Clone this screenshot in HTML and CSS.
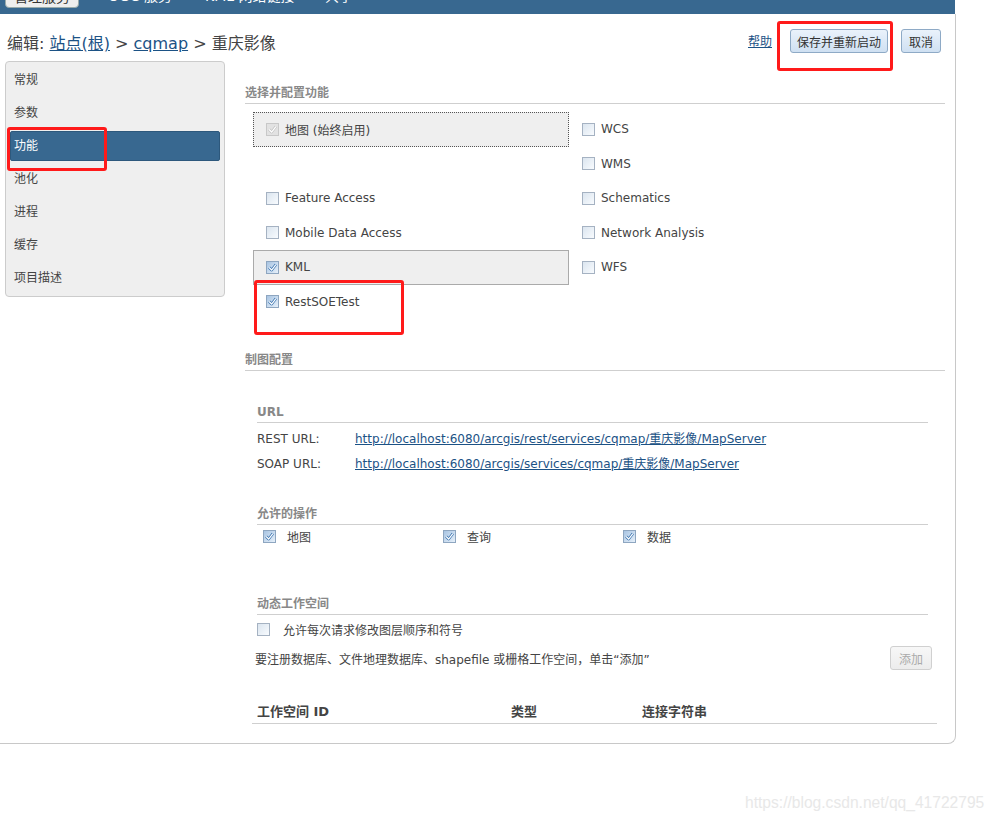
FILE: index.html
```html
<!DOCTYPE html>
<html lang="zh-CN">
<head>
<meta charset="utf-8">
<title>编辑: 重庆影像</title>
<link rel="stylesheet" href="styles.css">
</head>
<body>
<div class="topbar">
  <div class="tabs">
    <div class="tabcell"><span class="tab tab-active">管理服务</span></div>
    <div class="tabcell"><span class="tab">OGC 服务</span></div>
    <div class="tabcell"><span class="tab">KML 网络链接</span></div>
    <div class="tabcell"><span class="tab">共享</span></div>
  </div>
</div>
<div class="page">
  <div class="header">
    <h1 class="title">编辑: <a href="#" class="crumb">站点(根)</a> &gt; <a href="#" class="crumb">cqmap</a> &gt; 重庆影像</h1>
    <div class="actions">
      <a href="#" class="help">帮助</a>
      <button class="btn btn-save">保存并重新启动</button>
      <button class="btn btn-cancel">取消</button>
    </div>
  </div>
  <div class="main">
    <div class="sidebar">
      <div class="nav-item">常规</div>
      <div class="nav-item">参数</div>
      <div class="nav-item nav-active">功能</div>
      <div class="nav-item">池化</div>
      <div class="nav-item">进程</div>
      <div class="nav-item">缓存</div>
      <div class="nav-item">项目描述</div>
    </div>
    <div class="content">
      <div class="sec-title">选择并配置功能</div>
      <div class="features">
        <div class="feat feat-dotted"><span class="cb cb-dis"><svg viewBox="0 0 13 13" class="chk"><path d="M2.5 6.5 L5.5 9.5 L10.5 3" class="chk-out-dis"/><path d="M2.5 6.5 L5.5 9.5 L10.5 3" class="chk-in"/></svg></span><span>地图 (始终启用)</span></div>
        <div class="feat"><span class="cb"></span><span>WCS</span></div>
        <div class="feat"></div>
        <div class="feat"><span class="cb"></span><span>WMS</span></div>
        <div class="feat"><span class="cb"></span><span>Feature Access</span></div>
        <div class="feat"><span class="cb"></span><span>Schematics</span></div>
        <div class="feat"><span class="cb"></span><span>Mobile Data Access</span></div>
        <div class="feat"><span class="cb"></span><span>Network Analysis</span></div>
        <div class="feat feat-solid"><span class="cb cb-on"><svg viewBox="0 0 13 13" class="chk"><path d="M2.5 6.5 L5.5 9.5 L10.5 3" class="chk-out"/><path d="M2.5 6.5 L5.5 9.5 L10.5 3" class="chk-in"/></svg></span><span>KML</span></div>
        <div class="feat"><span class="cb"></span><span>WFS</span></div>
        <div class="feat"><span class="cb cb-on"><svg viewBox="0 0 13 13" class="chk"><path d="M2.5 6.5 L5.5 9.5 L10.5 3" class="chk-out"/><path d="M2.5 6.5 L5.5 9.5 L10.5 3" class="chk-in"/></svg></span><span>RestSOETest</span></div>
        <div class="feat"></div>
      </div>

      <div class="sec-title sec-map">制图配置</div>
      <div class="inner">
        <div class="sec-title sec-url">URL</div>
        <div class="url-row url-first"><span class="url-label">REST URL:</span><a href="#" class="url-link">http://localhost:6080/arcgis/rest/services/cqmap/重庆影像/MapServer</a></div>
        <div class="url-row"><span class="url-label">SOAP URL:</span><a href="#" class="url-link">http://localhost:6080/arcgis/services/cqmap/重庆影像/MapServer</a></div>

        <div class="sec-title sec-ops">允许的操作</div>
        <div class="ops">
          <div class="op"><span class="cb cb-on"><svg viewBox="0 0 13 13" class="chk"><path d="M2.5 6.5 L5.5 9.5 L10.5 3" class="chk-out"/><path d="M2.5 6.5 L5.5 9.5 L10.5 3" class="chk-in"/></svg></span><span>地图</span></div>
          <div class="op"><span class="cb cb-on"><svg viewBox="0 0 13 13" class="chk"><path d="M2.5 6.5 L5.5 9.5 L10.5 3" class="chk-out"/><path d="M2.5 6.5 L5.5 9.5 L10.5 3" class="chk-in"/></svg></span><span>查询</span></div>
          <div class="op"><span class="cb cb-on"><svg viewBox="0 0 13 13" class="chk"><path d="M2.5 6.5 L5.5 9.5 L10.5 3" class="chk-out"/><path d="M2.5 6.5 L5.5 9.5 L10.5 3" class="chk-in"/></svg></span><span>数据</span></div>
        </div>

        <div class="sec-title sec-dyn">动态工作空间</div>
        <div class="dyn-row"><span class="cb"></span><span>允许每次请求修改图层顺序和符号</span></div>
        <div class="reg-row"><span>要注册数据库、文件地理数据库、shapefile 或栅格工作空间，单击“添加”</span><button class="btn btn-add" disabled>添加</button></div>
        <div class="ws-head"><span class="ws-c1">工作空间 ID</span><span class="ws-c2">类型</span><span class="ws-c3">连接字符串</span></div>
      </div>
    </div>
  </div>
</div>

<div class="mark mark-save"></div>
<div class="mark mark-nav"></div>
<div class="mark mark-soe"></div>
<div class="watermark">https://blog.csdn.net/qq_41722795</div>
</body>
</html>
```

FILE: styles.css
```css
* { box-sizing: border-box; }
body {
  margin: 0;
  background: #fff;
  font-family: "DejaVu Sans", "Noto Sans CJK SC", sans-serif;
  font-size: 12px;
  color: #444;
  position: relative;
  width: 996px;
  height: 822px;
  overflow: hidden;
}
a { color: #1c5285; }

.topbar {
  width: 955px;
  height: 14px;
  background: #386890;
  overflow: hidden;
}
.tabs {
  display: grid;
  grid-template-columns: 103px 97px 120px 60px;
  padding-left: 5px;
  margin-top: -16px;
}
.tab {
  display: inline-block;
  height: 24px;
  line-height: 24px;
  font-size: 14px;
  color: #fff;
  white-space: nowrap;
}
.tab-active {
  width: 74px;
  text-align: center;
  background: #eeeeee;
  color: #333;
  border: 1px solid #9aa;
  border-radius: 0 0 4px 4px;
}

.page {
  width: 956px;
  padding: 0 10px 19px 5px;
  border-right: 1px solid #c8c8c8;
  border-bottom: 1px solid #c8c8c8;
  border-bottom-right-radius: 8px;
}
.header {
  display: flex;
  justify-content: space-between;
  align-items: flex-start;
  height: 47px;
}
.title {
  margin: 20px 0 0 2px;
  font-size: 16px;
  line-height: 20px;
  font-weight: normal;
  color: #444;
}
.crumb { color: #1c5285; }
.actions {
  display: flex;
  align-items: center;
  margin-top: 15px;
  margin-right: 4px;
}
.help {
  font-size: 12px;
  margin-right: 18px;
  margin-top: -2px;
}
.btn {
  height: 24px;
  padding: 0 6px;
  font-family: "Noto Sans CJK SC", sans-serif;
  font-size: 12px;
  color: #333;
  border: 1px solid #8eaac6;
  border-radius: 3px;
  background: linear-gradient(#eaf2fb, #cfe0f2);
  white-space: nowrap;
}
.btn-save { width: 98px; }
.btn-cancel { width: 40px; margin-left: 13px; padding: 0; }
.btn-add {
  width: 42px;
  padding: 0;
  color: #aaa;
  border: 1px solid #d0d0d0;
  background: linear-gradient(#f7f7f7, #ececec);
}

.main {
  display: flex;
  gap: 20px;
}
.sidebar {
  width: 220px;
  height: 236px;
  padding: 3px 4px 2px 4px;
  background: #efefef;
  border: 1px solid #ccc;
  border-radius: 4px;
  display: flex;
  flex-direction: column;
  gap: 3px;
}
.nav-item {
  height: 30px;
  line-height: 30px;
  padding-left: 4px;
  color: #444;
}
.nav-active {
  background: #386890;
  color: #fff;
  border: 1px solid #2d587c;
  border-radius: 2px;
  line-height: 28px;
  padding-left: 3px;
}

.content {
  width: 700px;
  padding-top: 24px;
}
.sec-title {
  font-weight: bold;
  color: #888;
  line-height: 16px;
  padding-bottom: 2px;
  border-bottom: 1px solid #cfcfcf;
}
.features {
  display: grid;
  grid-template-columns: 316px 1fr;
  grid-auto-rows: 34.5px;
  margin: 8px 0 0 8px;
}
.feat {
  display: flex;
  align-items: center;
  gap: 6px;
  padding-left: 12px;
  border: 1px solid transparent;
}
.feat-dotted {
  background: #efefef;
  border: 1px dotted #555;
}
.feat-solid {
  background: #efefef;
  border: 1px solid #aaa;
}
.cb {
  width: 13px;
  height: 13px;
  flex: none;
  border: 1px solid #a5b2c2;
  background: linear-gradient(135deg, #dbe5ef, #f8fbfe);
  display: inline-flex;
}
.cb-on {
  border-color: #8ea6c0;
  background: linear-gradient(135deg, #a8c4e2, #e6f0fa);
}
.cb-dis {
  border-color: #c8c8c8;
  background: #e2e2e2;
}
.chk { width: 11px; height: 11px; }
.chk-out { fill: none; stroke: #3570ae; stroke-width: 3.2; stroke-linejoin: round; }
.chk-out-dis { fill: none; stroke: #c2c2c2; stroke-width: 3.2; stroke-linejoin: round; }
.chk-in { fill: none; stroke: #fff; stroke-width: 1.5; }

.sec-map { margin-top: 33px; }
.inner {
  margin: 0 17px 0 12px;
}
.sec-url { margin-top: 33px; }
.url-row {
  display: flex;
  line-height: 25px;
}
.url-first { margin-top: 4px; }
.url-label { width: 98px; flex: none; }
.url-link { color: #1c5285; }

.sec-ops { margin-top: 29px; }
.ops {
  display: flex;
  margin-top: 2px;
  padding-left: 6px;
  height: 18px;
}
.op {
  width: 180px;
  display: flex;
  align-items: center;
  gap: 11px;
}
.sec-dyn { margin-top: 51px; }
.dyn-row {
  display: flex;
  align-items: center;
  gap: 13px;
  height: 18px;
  margin-top: 5px;
}
.reg-row {
  display: flex;
  justify-content: space-between;
  align-items: center;
  height: 24px;
  margin: 8px -4px 0 -2px;
}
.ws-head {
  display: flex;
  margin: 34px -9px 0 -5px;
  padding: 0 0 3px 5px;
  line-height: 16px;
  font-weight: bold;
  color: #444;
  font-size: 13px;
  border-bottom: 1px solid #cfcfcf;
}
.ws-c1 { width: 254px; }
.ws-c2 { width: 131px; }

.mark {
  position: absolute;
  border: 3px solid #ff1a1a;
  border-radius: 3px;
}
.mark-save { left: 777px; top: 21px; width: 116px; height: 50px; }
.mark-nav { left: 7px; top: 127px; width: 100px; height: 44px; }
.mark-soe { left: 254px; top: 280px; width: 150px; height: 55px; }

.watermark {
  position: absolute;
  left: 745px;
  top: 794px;
  font-family: "Liberation Sans", sans-serif;
  font-size: 15.6px;
  color: #e8e8e8;
}
```
